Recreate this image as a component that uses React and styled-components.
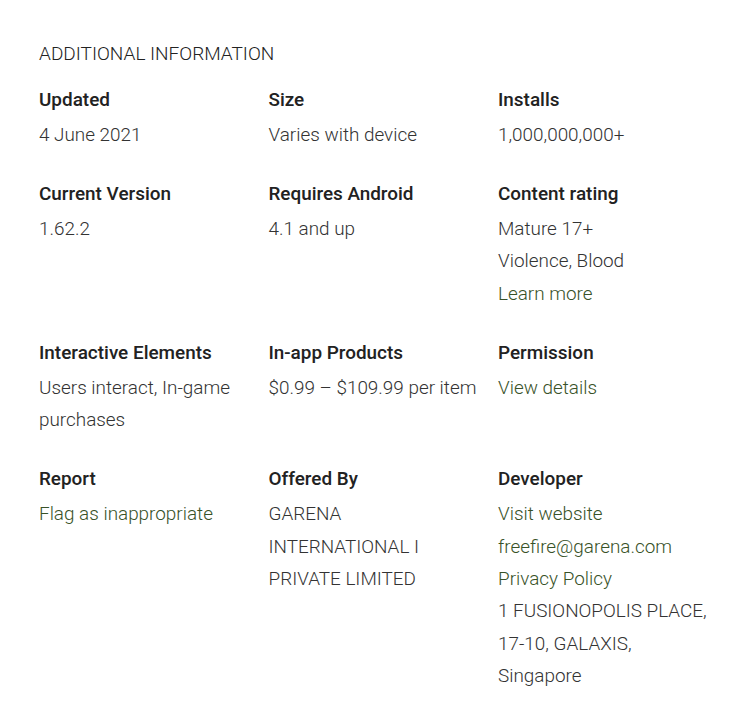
import React from 'react';
import styled, { createGlobalStyle } from 'styled-components';

const GlobalStyle = createGlobalStyle`
  body {
    margin: 0;
    background: #fff;
    font-family: Roboto, "Liberation Sans", Arial, sans-serif;
  }
`;

const Section = styled.section`
  padding: 42px 0 0 39px;
  width: 738px;
  box-sizing: border-box;
`;

const Title = styled.h2`
  margin: 0 0 22px;
  font-family: "Roboto Light", Roboto, sans-serif;
  font-size: 19px;
  line-height: 24px;
  font-weight: 300;
  color: #222;
  text-transform: uppercase;
`;

const Grid = styled.div`
  display: grid;
  grid-template-columns: repeat(3, 229.5px);
  row-gap: 30.6px;
`;

const Item = styled.div`
  padding-right: 16px;
`;

const Label = styled.div`
  font-family: "Roboto Medium", Roboto, sans-serif;
  font-size: 18.9px;
  line-height: 24px;
  font-weight: 500;
  color: #222;
  margin-bottom: 7px;
`;

const Value = styled.div`
  font-family: "Roboto Light", Roboto, sans-serif;
  font-size: 18.9px;
  line-height: 32.4px;
  font-weight: 300;
  color: #333;
`;

const Link = styled.a`
  display: block;
  font-family: "Roboto Light", Roboto, sans-serif;
  font-size: 18.9px;
  line-height: 32.4px;
  font-weight: 300;
  color: #385228;
  text-decoration: none;
`;

const items = [
  { label: 'Updated', lines: [{ text: '4 June 2021' }] },
  { label: 'Size', lines: [{ text: 'Varies with device' }] },
  { label: 'Installs', lines: [{ text: '1,000,000,000+' }] },
  { label: 'Current Version', lines: [{ text: '1.62.2' }] },
  { label: 'Requires Android', lines: [{ text: '4.1 and up' }] },
  {
    label: 'Content rating',
    lines: [{ text: 'Mature 17+' }, { text: 'Violence, Blood' }, { text: 'Learn more', link: true }],
  },
  { label: 'Interactive Elements', lines: [{ text: 'Users interact, In-game purchases' }] },
  { label: 'In-app Products', lines: [{ text: '$0.99 – $109.99 per item' }] },
  { label: 'Permission', lines: [{ text: 'View details', link: true }] },
  { label: 'Report', lines: [{ text: 'Flag as inappropriate', link: true }] },
  { label: 'Offered By', lines: [{ text: 'GARENA INTERNATIONAL I PRIVATE LIMITED' }] },
  {
    label: 'Developer',
    lines: [
      { text: 'Visit website', link: true },
      { text: 'freefire@garena.com', link: true },
      { text: 'Privacy Policy', link: true },
      { text: '1 FUSIONOPOLIS PLACE, 17-10, GALAXIS, Singapore' },
    ],
  },
];

const App = () => (
  <>
    <GlobalStyle />
    <Section>
      <Title>Additional Information</Title>
      <Grid>
        {items.map((item) => (
          <Item key={item.label}>
            <Label>{item.label}</Label>
            {item.lines.map((line) =>
              line.link ? (
                <Link key={line.text} href="#">{line.text}</Link>
              ) : (
                <Value key={line.text}>{line.text}</Value>
              )
            )}
          </Item>
        ))}
      </Grid>
    </Section>
  </>
);

export default App;
